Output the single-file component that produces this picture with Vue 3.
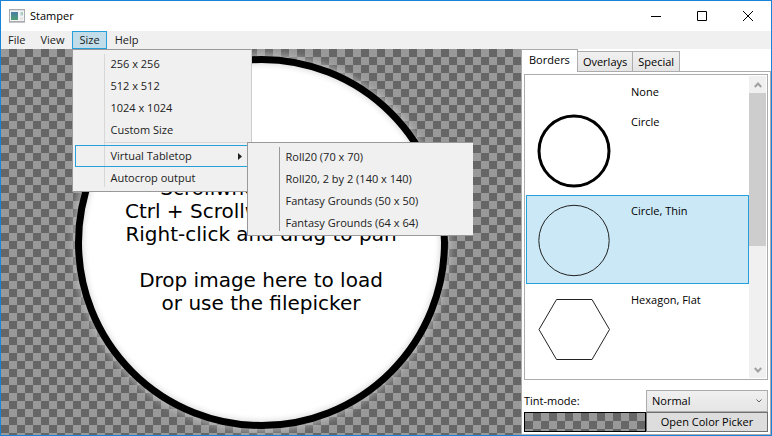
<script setup>
import { ref } from 'vue'

const sizeItems = ['256 x 256', '512 x 512', '1024 x 1024', 'Custom Size']
const tabletopItems = [
  'Roll20 (70 x 70)',
  'Roll20, 2 by 2 (140 x 140)',
  'Fantasy Grounds (50 x 50)',
  'Fantasy Grounds (64 x 64)',
]
const tabs = ['Borders', 'Overlays', 'Special']
const activeTab = ref('Borders')
const borders = [
  { name: 'None', shape: 'none' },
  { name: 'Circle', shape: 'circle' },
  { name: 'Circle, Thin', shape: 'thin' },
  { name: 'Hexagon, Flat', shape: 'hexagon' },
]
const selected = ref('Circle, Thin')
const tint = ref('Normal')
</script>

<template>
  <div class="window">
    <header class="titlebar">
      <svg class="app-icon" width="16" height="14" viewBox="0 0 16 14" aria-hidden="true">
        <defs>
          <linearGradient id="screen" x1="0" y1="0" x2="0" y2="1">
            <stop offset="0" stop-color="#4a7fa5" />
            <stop offset="1" stop-color="#4f9e72" />
          </linearGradient>
        </defs>
        <rect x="0.5" y="0.5" width="15" height="12" fill="#f4f4f4" stroke="#a9adb1" />
        <rect x="1" y="1" width="14" height="1" fill="#dcdfe2" />
        <rect x="2" y="3" width="7" height="8" fill="url(#screen)" />
        <rect x="11" y="3" width="3" height="4" fill="#d5e2ee" />
        <rect x="12" y="3" width="2" height="3" fill="#a8cfb8" />
        <rect x="11" y="8" width="3" height="3" fill="#e6e6e6" />
        <rect x="0" y="13" width="16" height="1" fill="#c4c4c4" />
      </svg>
      <span class="title">Stamper</span>
      <div class="window-buttons">
        <button type="button" aria-label="Minimize">
          <svg width="10" height="10" viewBox="0 0 10 10"><path d="M0 5.5H10" /></svg>
        </button>
        <button type="button" aria-label="Maximize">
          <svg width="10" height="10" viewBox="0 0 10 10"><path d="M.5 .5H9.5V9.5H.5Z" /></svg>
        </button>
        <button type="button" aria-label="Close">
          <svg width="10" height="10" viewBox="0 0 10 10"><path d="M0 0L10 10M10 0L0 10" /></svg>
        </button>
      </div>
    </header>

    <nav class="menubar">
      <button type="button" class="menu-title">File</button>
      <button type="button" class="menu-title">View</button>
      <div class="menu-anchor">
        <button type="button" class="menu-title open">Size</button>
        <div class="menu size-menu">
          <button v-for="item in sizeItems" :key="item" type="button" class="menu-item">{{ item }}</button>
          <div class="separator"></div>
          <div class="menu-anchor">
            <button type="button" class="menu-item highlighted">
              <span>Virtual Tabletop</span>
              <svg width="4" height="7" viewBox="0 0 4 7" aria-hidden="true"><path d="M0 0L4 3.5L0 7Z" fill="#212121" /></svg>
            </button>
            <div class="menu submenu">
              <button v-for="item in tabletopItems" :key="item" type="button" class="menu-item">{{ item }}</button>
            </div>
          </div>
          <button type="button" class="menu-item">Autocrop output</button>
        </div>
      </div>
      <button type="button" class="menu-title">Help</button>
    </nav>

    <main class="workspace">
      <section class="canvas checker">
        <svg class="token" viewBox="0 0 386 386" aria-hidden="true">
          <defs>
            <filter id="soft" x="-10%" y="-10%" width="120%" height="120%">
              <feGaussianBlur stdDeviation="3" />
            </filter>
            <clipPath id="disc"><circle cx="193" cy="193" r="184" /></clipPath>
          </defs>
          <circle cx="193.5" cy="193.5" r="183" fill="none" stroke="#ccc" stroke-width="12" opacity=".6" filter="url(#soft)" />
          <circle cx="193.5" cy="193.5" r="183" fill="#fff" />
          <g clip-path="url(#disc)">
            <circle cx="193.5" cy="193.5" r="183" fill="none" stroke="#000" stroke-width="9" opacity=".15" filter="url(#soft)" />
          </g>
          <circle cx="193.5" cy="193.5" r="183" fill="none" stroke="#000" stroke-width="7" />
        </svg>
        <p class="hint">
          Scrollwheel to zoom<br />Ctrl + Scrollwheel to rotate<br />Right-click and drag to pan<br /><br />Drop image here to load<br />or use the filepicker
        </p>
      </section>

      <aside class="panel">
        <div class="tabs" role="tablist">
          <button
            v-for="tab in tabs"
            :key="tab"
            type="button"
            role="tab"
            class="tab"
            :class="{ active: tab === activeTab }"
            :aria-selected="tab === activeTab"
            @click="activeTab = tab"
          >{{ tab }}</button>
        </div>
        <div class="tab-page">
          <div class="listbox">
            <div class="options">
              <button
                v-for="border in borders"
                :key="border.name"
                type="button"
                class="option"
                :class="{ selected: border.name === selected, plain: border.shape === 'none' }"
                @click="selected = border.name"
              >
                <svg v-if="border.shape !== 'none'" width="74" height="74" viewBox="0 0 74 74" fill="none" stroke="#000" aria-hidden="true">
                  <circle v-if="border.shape === 'circle'" cx="37" cy="37" r="35" stroke-width="3" />
                  <circle v-else-if="border.shape === 'thin'" cx="37" cy="37.5" r="35.2" stroke="#222" />
                  <path v-else d="M2 37.5L19.5 7.5H55L72.500 37.5L55 67.500H19.500Z" stroke="#222" />
                </svg>
                <span class="option-name">{{ border.name }}</span>
              </button>
            </div>
            <div class="scrollbar">
              <button type="button" aria-label="Scroll up">
                <svg width="8" height="6" viewBox="0 0 8 6"><path d="M.8 5L4 1.500L7.200 5" /></svg>
              </button>
              <div class="track"><div class="thumb"></div></div>
              <button type="button" aria-label="Scroll down">
                <svg width="8" height="6" viewBox="0 0 8 6"><path d="M.8 1L4 4.500L7.200 1" /></svg>
              </button>
            </div>
          </div>
          <div class="tint">
            <label for="tint-mode">Tint-mode:</label>
            <div class="select-wrap">
              <select id="tint-mode" v-model="tint"><option>Normal</option></select>
              <svg width="6" height="4" viewBox="0 0 6 4" aria-hidden="true"><path d="M.5 .5L3 3L5.500 .5" /></svg>
            </div>
            <div class="swatch checker"></div>
            <button type="button" class="picker">Open Color Picker</button>
          </div>
        </div>
      </aside>
    </main>
  </div>
</template>

<style>
body {
  margin: 0;
}
</style>

<style scoped>
.window {
  box-sizing: border-box;
  display: flex;
  flex-direction: column;
  height: 100vh;
  border: 1px solid #1883d7;
  background: #fff;
  color: #000;
  font: 11px/16px "Open Sans", "Noto Sans", sans-serif;
}
.window * {
  box-sizing: border-box;
}
button,
select {
  margin: 0;
  padding: 0;
  border: 0;
  border-radius: 0;
  background: none;
  color: inherit;
  font: inherit;
}
.titlebar {
  display: flex;
  align-items: center;
  flex: none;
  height: 30px;
  padding-left: 8px;
}
.title {
  margin-left: 5px;
  flex: 1;
}
.window-buttons {
  display: flex;
}
.window-buttons button {
  display: grid;
  place-items: center;
  width: 46px;
  height: 28px;
}
.window-buttons path {
  fill: none;
  stroke: #000;
}
.menubar {
  display: flex;
  gap: 1px;
  flex: none;
  height: 18px;
  background: #f0f0f0;
  color: #212121;
}
.menu-anchor {
  position: relative;
}
.menu-title {
  height: 18px;
  padding: 0 6px;
  border: 1px solid transparent;
}
.menu-title.open {
  border-color: #26a0da;
  background: #c1dde9;
}
.menu {
  position: absolute;
  z-index: 2;
  border: 1px solid #999;
  background: #f0f0f0;
}
.size-menu {
  top: 18px;
  left: 0;
  width: 180px;
  padding: 3px 2px 2px;
  border-right-color: #ccc;
}
.menu::before {
  content: "";
  position: absolute;
  top: 4px;
  bottom: 4px;
  left: 31px;
  width: 1px;
  background: #d7d7d7;
}
.submenu::before {
  background: #999;
}
.submenu {
  top: -3px;
  left: 172px;
  width: 226px;
  padding: 3px 2px 1px;
  border-right: 0;
}
.menu-item {
  position: relative;
  display: flex;
  align-items: center;
  justify-content: space-between;
  width: 100%;
  height: 22px;
  padding: 0 6px 0 34px;
  border: 1px solid transparent;
  text-align: left;
  white-space: nowrap;
}
.menu-item.highlighted {
  border-color: #26a0da;
}
.separator {
  height: 1px;
  margin: 1px -2px 2px 30px;
  background: #d7d7d7;
}
.workspace {
  display: flex;
  flex: 1;
  min-height: 0;
}
.checker {
  background: repeating-conic-gradient(#666 0 25%, #999 0 50%) 0 0 / 16px 16px;
}
.canvas {
  display: grid;
  grid-template: minmax(0, 1fr) / minmax(0, 1fr);
  flex: 1;
  min-width: 0;
  overflow: hidden;
}
.token,
.hint {
  grid-area: 1 / 1;
}
.token {
  width: 100%;
  height: 100%;
}
.hint {
  align-self: center;
  margin: 8px 0 0;
  text-align: center;
  font: 20px/23px "DejaVu Sans", sans-serif;
}
.panel {
  display: flex;
  flex-direction: column;
  flex: none;
  width: 250px;
}
.tabs {
  position: relative;
  z-index: 1;
  display: flex;
  align-items: flex-end;
  flex: none;
  height: 23px;
}
.tab {
  height: 21px;
  padding: 0 5px;
  border: 1px solid #acacac;
  border-left-width: 0;
  background: linear-gradient(#f0f0f0, #e5e5e5);
}
.tab.active {
  height: 23px;
  padding: 0 7px 2px;
  border-left-width: 1px;
  border-bottom: 0;
  background: #fff;
}
.tab-page {
  display: flex;
  flex-direction: column;
  flex: 1;
  min-height: 0;
  margin-top: -1px;
  padding: 2px;
  border: 1px solid #acacac;
}
.listbox {
  display: flex;
  flex: 1;
  min-height: 0;
  padding: 1px;
  border: 1px solid #acacac;
}
.options {
  flex: 1;
  overflow: hidden;
}
.option {
  display: flex;
  align-items: flex-start;
  width: 100%;
  height: 89px;
  padding: 7px 0 0 10px;
  border: 1px solid transparent;
  text-align: left;
}
.option.plain {
  height: 30px;
  padding-left: 104px;
}
.option.selected {
  border-color: #26a0da;
  background: #cbe8f6;
}
.option svg + .option-name {
  margin-left: 20px;
}
.scrollbar {
  display: flex;
  flex-direction: column;
  flex: none;
  width: 17px;
  background: #f0f0f0;
}
.scrollbar button {
  display: grid;
  place-items: center;
  height: 17px;
}
.scrollbar path,
.select-wrap path {
  fill: none;
  stroke: #a0a0a0;
  stroke-width: 2;
}
.track {
  flex: 1;
}
.thumb {
  height: 57%;
  background: #cdcdcd;
}
.tint {
  display: grid;
  grid-template-columns: 1fr 1fr;
  grid-template-rows: 22px 20px;
  align-items: center;
  flex: none;
  margin-top: 10px;
}
.select-wrap {
  display: grid;
  align-items: center;
  height: 100%;
}
.select-wrap > * {
  grid-area: 1 / 1;
}
.select-wrap select {
  width: 100%;
  height: 100%;
  padding: 0 5px;
  border: 1px solid #acacac;
  background: linear-gradient(#f0f0f0, #e5e5e5);
  appearance: none;
}
.select-wrap svg {
  justify-self: end;
  margin-right: 6px;
  pointer-events: none;
}
.select-wrap path {
  stroke: #606060;
  stroke-width: 1;
}
.swatch {
  height: 100%;
  border: 1px solid #000;
}
.picker {
  height: 100%;
  border: 1px solid #707070;
  background: #ddd;
}
</style>
